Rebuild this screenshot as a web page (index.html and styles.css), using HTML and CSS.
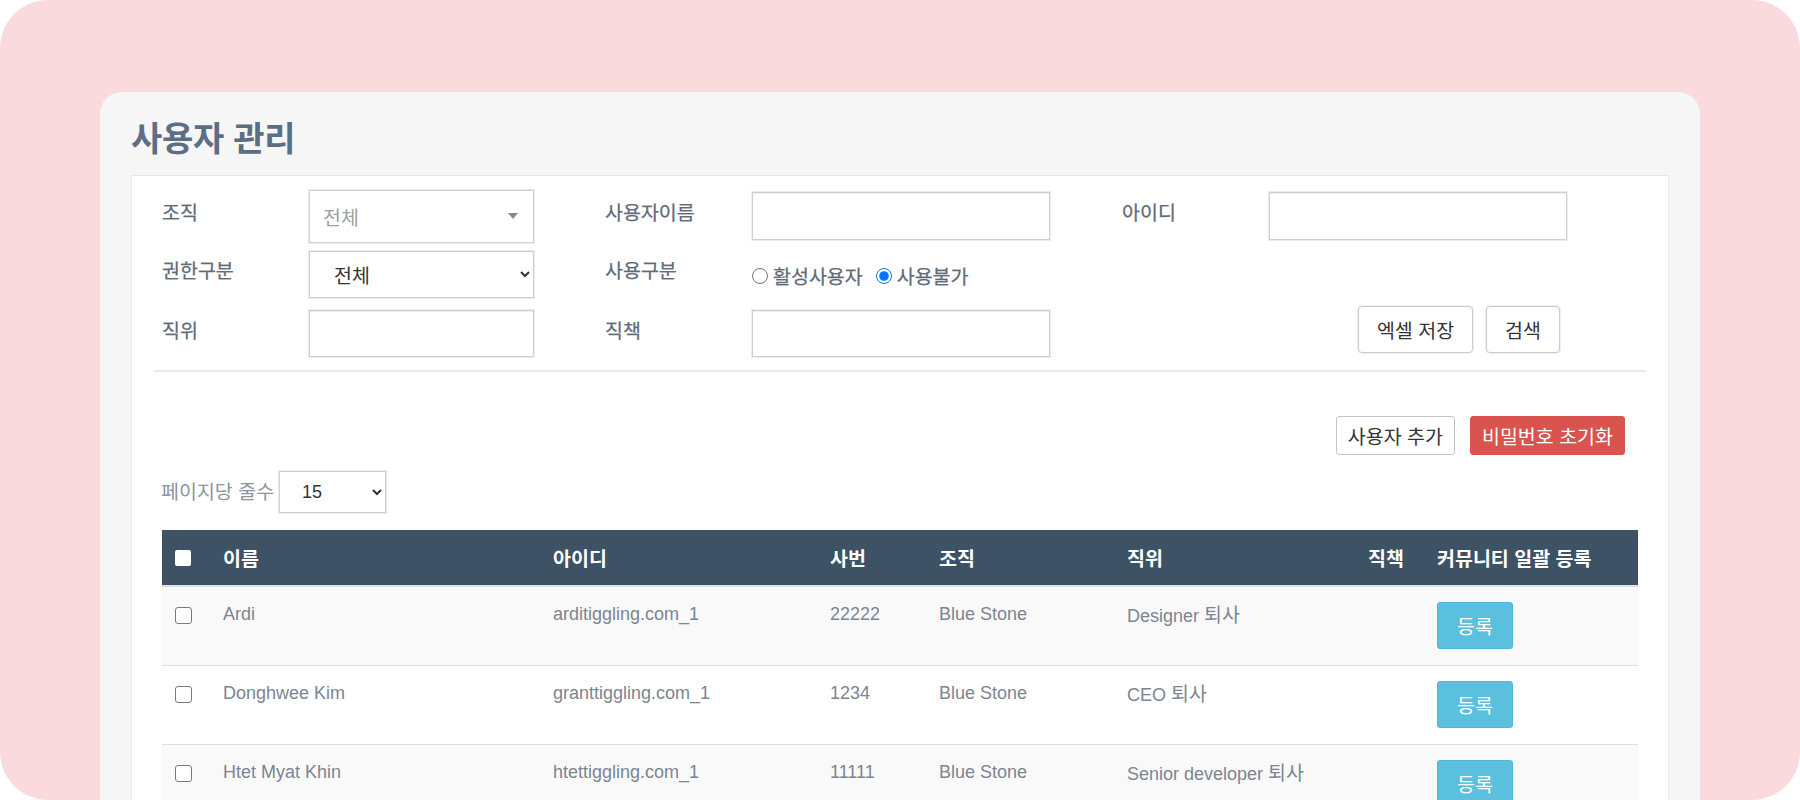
FILE: index.html
```html
<!DOCTYPE html>
<html lang="ko">
<head>
<meta charset="utf-8">
<title>사용자 관리</title>
<link rel="stylesheet" href="styles.css">
</head>
<body>
<div class="frame">
  <div class="card">
    <h1 class="title">사용자 관리</h1>
    <div class="panel">
      <div class="filters">
        <div class="frow r1">
          <label class="lbl">조직</label>
          <div class="cell">
            <div class="fake-select"><span>전체</span><span class="tri"></span></div>
          </div>
          <label class="lbl">사용자이름</label>
          <div class="cell"><input class="inp w298" type="text"></div>
          <label class="lbl">아이디</label>
          <div class="cell"><input class="inp w298" type="text"></div>
        </div>
        <div class="frow r2">
          <label class="lbl">권한구분</label>
          <div class="cell">
            <select class="nsel"><option>전체</option></select>
          </div>
          <label class="lbl">사용구분</label>
          <div class="cell radios">
            <label class="rad"><input type="radio" name="use">활성사용자</label>
            <label class="rad"><input type="radio" name="use" checked>사용불가</label>
          </div>
          <span></span><span></span>
        </div>
        <div class="frow r3">
          <label class="lbl">직위</label>
          <div class="cell end"><input class="inp w225" type="text"></div>
          <label class="lbl">직책</label>
          <div class="cell end"><input class="inp w298" type="text"></div>
          <span></span>
          <div class="cell btns">
            <button class="btn">엑셀 저장</button>
            <button class="btn">검색</button>
          </div>
        </div>
      </div>

      <div class="actions">
        <button class="btn-sm">사용자 추가</button>
        <button class="btn-sm danger">비밀번호 초기화</button>
      </div>

      <div class="perpage">
        <span class="pp-lbl">페이지당 줄수</span>
        <select class="pp-sel"><option>15</option></select>
      </div>

      <table class="grid">
        <colgroup>
          <col class="c0"><col class="c1"><col class="c2"><col class="c3">
          <col class="c4"><col class="c5"><col class="c6"><col class="c7">
        </colgroup>
        <thead>
          <tr>
            <th class="chk"><input type="checkbox" class="hchk"></th>
            <th>이름</th>
            <th>아이디</th>
            <th>사번</th>
            <th>조직</th>
            <th>직위</th>
            <th>직책</th>
            <th>커뮤니티 일괄 등록</th>
          </tr>
        </thead>
        <tbody>
          <tr>
            <td class="chk"><input type="checkbox" class="rchk"></td>
            <td>Ardi</td>
            <td>arditiggling.com_1</td>
            <td>22222</td>
            <td>Blue Stone</td>
            <td>Designer <span class="ko">퇴사</span></td>
            <td></td>
            <td><button class="reg">등록</button></td>
          </tr>
          <tr>
            <td class="chk"><input type="checkbox" class="rchk"></td>
            <td>Donghwee Kim</td>
            <td>granttiggling.com_1</td>
            <td>1234</td>
            <td>Blue Stone</td>
            <td>CEO <span class="ko">퇴사</span></td>
            <td></td>
            <td><button class="reg">등록</button></td>
          </tr>
          <tr>
            <td class="chk"><input type="checkbox" class="rchk"></td>
            <td>Htet Myat Khin</td>
            <td>htettiggling.com_1</td>
            <td>11111</td>
            <td>Blue Stone</td>
            <td>Senior developer <span class="ko">퇴사</span></td>
            <td></td>
            <td><button class="reg">등록</button></td>
          </tr>
        </tbody>
      </table>
    </div>
  </div>
</div>
</body>
</html>
```

FILE: styles.css
```css
* { box-sizing: border-box; }

html, body {
  margin: 0;
  padding: 0;
  background: #ffffff;
}

body {
  font-family: "Noto Sans CJK KR", "Liberation Sans", sans-serif;
  color: #6f7a87;
}

.frame {
  height: 800px;
  background: #fadadd;
  border-radius: 48px;
  padding: 92px 100px 0 100px;
  overflow: hidden;
}

.card {
  background: #f6f6f6;
  border-radius: 22px 22px 0 0;
  padding: 0 31px 0 31px;
  height: 800px;
}

.title {
  margin: 0;
  padding: 22px 0 0 0;
  height: 83px;
  font-size: 34px;
  font-weight: 700;
  line-height: 46px;
  color: #5b6f84;
  letter-spacing: -0.3px;
}

.panel {
  background: #ffffff;
  border: 1px solid #e4e9ee;
  border-bottom: none;
  height: 700px;
}

/* ---------- filters ---------- */
.filters {
  margin: 0 22px 0 22px;
  padding: 13px 8px 13px 8px;
  border-bottom: 2px solid #e6eaee;
  display: flex;
  flex-direction: column;
  gap: 8px;
}

.frow {
  display: grid;
  grid-template-columns: 147px 296px 147px 370px 147px 298px;
  align-items: center;
}
.r1 { height: 54px; }
.r2 { height: 47px; }
.r3 { height: 51px; }

.lbl {
  font-size: 19.5px;
  font-weight: 400;
  line-height: 26px;
  color: #5f6b79;
  padding-bottom: 9px;
  white-space: nowrap;
  -webkit-text-stroke: 0.25px #5f6b79;
}
.r3 .lbl { padding-bottom: 4px; }

.cell { display: flex; align-items: center; height: 100%; }
.cell.end { align-items: flex-end; }

.fake-select {
  width: 225px;
  height: 53px;
  border: 1px solid #d2d2d2;
  box-shadow: 0 0 0 1px #ececec;
  display: flex;
  align-items: center;
  justify-content: space-between;
  padding: 0 13px 0 13px;
  font-size: 19.5px;
  color: #9a9fa6;
  background: #fff;
}
.tri {
  width: 0;
  height: 0;
  border-left: 5px solid transparent;
  border-right: 5px solid transparent;
  border-top: 6px solid #888888;
  margin-right: 2px;
}

.nsel {
  width: 225px;
  height: 47px;
  border: 1px solid #cfcfcf;
  box-shadow: 0 0 0 1px #ececec;
  font-family: "Noto Sans CJK KR", sans-serif;
  font-size: 19.5px;
  font-weight: 400;
  color: #333;
  padding: 0 0 0 20px;
  background: #fff;
  border-radius: 0;
}

.inp {
  height: 48px;
  border: 1px solid #cfcfcf;
  box-shadow: inset 0 1px 1px rgba(0,0,0,0.075), 0 0 0 1px #ededed;
  background: #fff;
  border-radius: 0;
  padding: 0 10px;
  font-size: 18px;
}
.r3 .inp { height: 47px; }
.w298 { width: 298px; }
.w225 { width: 225px; }

.radios { gap: 0; }
.rad {
  display: flex;
  align-items: center;
  font-size: 19.5px;
  font-weight: 400;
  color: #5f6b79;
  -webkit-text-stroke: 0.25px #5f6b79;
  margin-right: 13px;
  padding-top: 2px;
  white-space: nowrap;
}
.rad input {
  width: 16px;
  height: 16px;
  margin: 0 5px 0 0;
}

.btns {
  justify-content: flex-end;
  align-items: flex-start;
  gap: 13px;
  padding-right: 7px;
}
.btn {
  height: 47px;
  padding: 0 18px;
  background: #fff;
  border: 1px solid #cccccc;
  border-radius: 4px;
  box-shadow: 0 0 0 1px #efefef;
  font-family: "Noto Sans CJK KR", sans-serif;
  font-size: 19.5px;
  font-weight: 400;
  color: #333333;
  white-space: nowrap;
}

/* ---------- actions ---------- */
.actions {
  display: flex;
  justify-content: flex-end;
  gap: 15px;
  margin-top: 44px;
  padding-right: 43px;
}
.btn-sm {
  height: 39px;
  padding: 0 11px;
  background: #fff;
  border: 1px solid #c4c4c4;
  border-radius: 3px;
  font-family: "Noto Sans CJK KR", sans-serif;
  font-size: 19.5px;
  font-weight: 400;
  color: #333333;
  white-space: nowrap;
}
.btn-sm.danger {
  background: #d9534f;
  border-color: #d9534f;
  color: #ffffff;
  padding: 0 11px;
}

/* ---------- per page ---------- */
.perpage {
  display: flex;
  align-items: center;
  margin-top: 16px;
  padding-left: 29px;
  gap: 5px;
}
.pp-lbl {
  font-size: 19.5px;
  color: #8c949d;
  padding-bottom: 4px;
  white-space: nowrap;
}
.pp-sel {
  width: 107px;
  height: 42px;
  border: 1px solid #cfcfcf;
  box-shadow: 0 0 0 1px #ededed;
  background: #fff;
  font-family: "Liberation Sans", sans-serif;
  font-size: 18px;
  color: #333;
  padding-left: 18px;
  border-radius: 0;
}

/* ---------- table ---------- */
.grid {
  margin: 17px 30px 0 30px;
  width: 1476px;
  border-collapse: collapse;
  table-layout: fixed;
}
.c0 { width: 51px; }
.c1 { width: 330px; }
.c2 { width: 277px; }
.c3 { width: 109px; }
.c4 { width: 188px; }
.c5 { width: 241px; }
.c6 { width: 69px; }
.c7 { width: 211px; }

.grid th {
  background: #3e5266;
  color: #ffffff;
  font-size: 19.5px;
  font-weight: 700;
  text-align: left;
  height: 56px;
  padding: 0 10px;
  border-bottom: 2px solid #dfe3e7;
  vertical-align: middle;
  white-space: nowrap;
}
.grid th.chk, .grid td.chk { padding: 0 0 0 13px; }

.hchk {
  -webkit-appearance: none;
  appearance: none;
  width: 16px;
  height: 16px;
  margin: 0;
  background: #ffffff;
  border-radius: 2px;
  display: block;
}

.grid td {
  font-family: "Liberation Sans", "Noto Sans CJK KR", sans-serif;
  font-size: 18px;
  line-height: 24px;
  color: #7c8592;
  padding: 15px 10px 16px 10px;
  height: 79px;
  vertical-align: top;
  border-top: 1px solid #dddddd;
  white-space: nowrap;
}
.grid td .ko {
  font-family: "Noto Sans CJK KR", sans-serif;
  font-size: 19.5px;
}
.grid td.chk { padding-top: 20px; }
.grid tbody tr:nth-child(odd) td { background: #f9f9f9; }
.grid tbody tr:nth-child(even) td { background: #ffffff; }
.grid tbody tr:first-child td { border-top: none; }

.rchk {
  -webkit-appearance: none;
  appearance: none;
  width: 17px;
  height: 17px;
  margin: 0;
  border: 1.5px solid #7a7a7a;
  border-radius: 3px;
  background: #ffffff;
  display: block;
}

.reg {
  width: 76px;
  height: 47px;
  background: #5bc0de;
  border: 1px solid #4fb8d8;
  border-radius: 3px;
  color: #ffffff;
  font-family: "Noto Sans CJK KR", sans-serif;
  font-size: 19.5px;
  font-weight: 400;
  padding: 0;
}
```
